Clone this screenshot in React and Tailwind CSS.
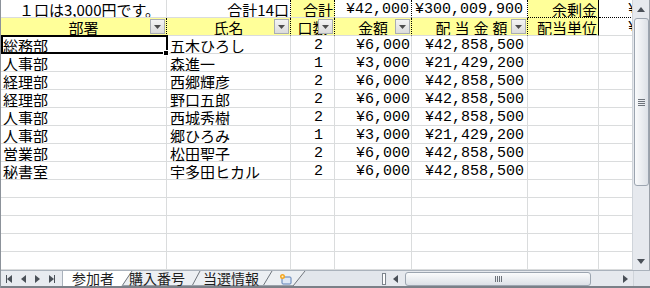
import React from "react";

const rows = [
  ["総務部", "五木ひろし", "2", "¥6,000", "¥42,858,500"],
  ["人事部", "森進一", "1", "¥3,000", "¥21,429,200"],
  ["経理部", "西郷輝彦", "2", "¥6,000", "¥42,858,500"],
  ["経理部", "野口五郎", "2", "¥6,000", "¥42,858,500"],
  ["人事部", "西城秀樹", "2", "¥6,000", "¥42,858,500"],
  ["人事部", "郷ひろみ", "1", "¥3,000", "¥21,429,200"],
  ["営業部", "松田聖子", "2", "¥6,000", "¥42,858,500"],
  ["秘書室", "宇多田ヒカル", "2", "¥6,000", "¥42,858,500"],
];

const base =
  "relative h-[18px] pt-[1px] border-r border-b border-[#dadcdd] overflow-hidden whitespace-nowrap leading-[17px] text-[15px] text-black";
const mono = "font-['Liberation_Mono',monospace] text-[14px]";

function Cell({ children, className = "" }) {
  return <div className={base + " " + className}>{children}</div>;
}

function Drop() {
  return (
    <div className="absolute right-[1px] top-[1px] w-[15px] h-[15px] border border-[#a9adb3] bg-gradient-to-b from-[#f4f4f4] to-[#dcdcdc] flex items-center justify-center">
      <svg width="7" height="4" viewBox="0 0 7 4">
        <polygon points="0,0 7,0 3.5,4" fill="#4d4d4d" />
      </svg>
    </div>
  );
}

function Tri({ dir, color = "#4a5058" }) {
  const pts = {
    up: "0,5 4,0 8,5",
    down: "0,0 8,0 4,5",
    left: "5,0 5,8 0,4",
    right: "0,0 0,8 5,4",
  }[dir];
  const w = dir === "up" || dir === "down" ? 8 : 5;
  const h = dir === "up" || dir === "down" ? 5 : 8;
  return (
    <svg width={w} height={h} viewBox={`0 0 ${w} ${h}`}>
      <polygon points={pts} fill={color} />
    </svg>
  );
}

export default function App() {
  const dotR = "border-r-black [border-right-style:dotted]";
  const dotB = "border-b-black [border-bottom-style:dotted]";
  const hdr = "bg-[#ffff99] text-[#0000ff]";
  return (
    <div className="w-[650px] h-[288px] bg-white overflow-hidden flex flex-col font-['Noto_Sans_CJK_JP',sans-serif] border-l border-[#8c929a]">
      <div className="flex h-[270px]">
        <div className="relative w-[632px] h-[270px] overflow-hidden">
          <div className="grid grid-cols-[166px_124px_44px_77px_116px_71px_80px] auto-rows-[18px] w-[678px]">
            {/* Row 1 */}
            <Cell className="text-right pr-[6px]">１口は3,000円です。</Cell>
            <Cell className={"text-right pr-[1px] " + dotR}>合計14口</Cell>
            <Cell className={"text-right pr-[1px] " + hdr + " " + dotR}>合計</Cell>
            <Cell className={"text-right pr-[2px] " + mono + " " + dotR}>¥42,000</Cell>
            <Cell className={"text-right pr-[4px] " + mono + " " + dotR}>¥300,009,900</Cell>
            <Cell className={"text-right pr-[1px] border-r-black " + hdr + " " + dotB}>余剰金</Cell>
            <Cell className={"pl-[29px] " + mono + " " + dotB}>¥9,999</Cell>
            {/* Row 2 */}
            <Cell className={"text-center " + hdr + " " + dotR}>
              <span className="underline underline-offset-[2px]">部署</span>
              <Drop />
            </Cell>
            <Cell className={"text-center " + hdr + " " + dotR}>
              <span className="underline underline-offset-[2px]">氏名</span>
              <Drop />
            </Cell>
            <Cell className={"text-center " + hdr + " " + dotR}>
              <span className="underline underline-offset-[2px]">口数</span>
              <Drop />
            </Cell>
            <Cell className={"text-center " + hdr + " " + dotR}>
              <span className="underline underline-offset-[2px]">金額</span>
              <Drop />
            </Cell>
            <Cell className={"text-center pl-[8px] " + hdr + " " + dotR}>
              <span className="underline underline-offset-[2px] tracking-[4px]">配当金額</span>
              <Drop />
            </Cell>
            <Cell className={"text-right pr-[1px] border-r-black " + hdr}>
              <span className="underline underline-offset-[2px]">配当単位</span>
            </Cell>
            <Cell className={"pl-[29px] " + mono}>¥9,999</Cell>
            {/* Data rows */}
            {rows.map((r, i) => (
              <React.Fragment key={i}>
                <Cell className="pl-[2px]">{r[0]}</Cell>
                <Cell className="pl-[3px]">{r[1]}</Cell>
                <Cell className={"text-right pr-[11px] " + mono}>{r[2]}</Cell>
                <Cell className={"text-right pr-[1px] " + mono}>{r[3]}</Cell>
                <Cell className={"text-right pr-[3px] " + mono}>{r[4]}</Cell>
                <Cell />
                <Cell />
              </React.Fragment>
            ))}
            {Array.from({ length: 5 }).map((_, i) => (
              <React.Fragment key={"e" + i}>
                <Cell />
                <Cell />
                <Cell />
                <Cell />
                <Cell />
                <Cell />
                <Cell />
              </React.Fragment>
            ))}
          </div>
          {/* selection */}
          <div className="absolute left-0 top-[35px] w-[167px] h-[19px] border-2 border-black pointer-events-none" />
          <div className="absolute left-[162px] top-[50px] w-[6px] h-[6px] bg-black border border-white" />
        </div>
        {/* vertical scrollbar */}
        <div className="w-[18px] h-[270px] bg-[#e6e9ee] border-l border-[#cfd4da] border-r border-r-[#9aa0a8] flex flex-col items-center">
          <div className="h-[18px] flex items-center justify-center">
            <Tri dir="up" />
          </div>
          <div className="w-[15px] h-[168px] rounded-[3px] border border-[#9ca5b0] bg-gradient-to-r from-[#fafbfc] to-[#dde1e7] flex flex-col items-center justify-center gap-[1px]">
            <div className="w-[7px] h-[1px] bg-[#6d737b]" />
            <div className="w-[7px] h-[1px] bg-[#6d737b]" />
            <div className="w-[7px] h-[1px] bg-[#6d737b]" />
            <div className="w-[7px] h-[1px] bg-[#6d737b]" />
          </div>
          <div className="flex-1" />
          <div className="h-[17px] flex items-center justify-center">
            <Tri dir="down" />
          </div>
        </div>
      </div>
      {/* bottom bar */}
      <div className="h-[18px] flex bg-[#e2e6ec] border-t border-[#aab2bc] border-b-2 border-b-[#7b8088]">
        <div className="w-[62px] flex items-center gap-[9px] pl-[5px] border-r border-[#aab2bc] bg-[#e8ebf0]">
          <div className="flex items-center">
            <div className="w-[1px] h-[8px] bg-[#4a5058]" />
            <Tri dir="left" />
          </div>
          <Tri dir="left" />
          <Tri dir="right" />
          <div className="flex items-center">
            <Tri dir="right" />
            <div className="w-[1px] h-[8px] bg-[#4a5058]" />
          </div>
        </div>
        <div className="relative w-[318px] h-[15px]">
          <svg className="absolute inset-0" width="318" height="15" viewBox="0 0 318 15">
            <polygon points="0,0 69,0 59,15 0,15" fill="#ffffff" />
            <polygon points="69,0 137,0 129,15 59,15" fill="#eceff3" />
            <polygon points="137,0 209,0 200,15 129,15" fill="#eceff3" />
            <polygon points="209,0 242,0 230,15 200,15" fill="#eceff3" />
            <line x1="59" y1="15" x2="69" y2="0" stroke="#6f757d" strokeWidth="1" />
            <line x1="129" y1="15" x2="137" y2="0" stroke="#6f757d" strokeWidth="1" />
            <line x1="200" y1="15" x2="209" y2="0" stroke="#6f757d" strokeWidth="1" />
            <line x1="230" y1="15" x2="242" y2="0" stroke="#6f757d" strokeWidth="1" />
            <line x1="59" y1="14.5" x2="230" y2="14.5" stroke="#9aa1aa" strokeWidth="1" />
          </svg>
          <div className="relative flex items-center h-[15px] text-[14px] leading-[15px] text-[#1e1e1e]">
            <span className="ml-[9px]">参加者</span>
            <span className="ml-[15px]">購入番号</span>
            <span className="ml-[18px]">当選情報</span>
            <span className="ml-[20px] flex items-center">
              <svg width="13" height="12" viewBox="0 0 13 12">
                <rect x="3" y="4" width="9" height="7" rx="1" fill="#dfe8f5" stroke="#5b7fb5" strokeWidth="1" />
                <circle cx="3.5" cy="3.5" r="2.5" fill="#f5a623" />
                <circle cx="3.5" cy="3.5" r="1" fill="#fff3c4" />
              </svg>
            </span>
          </div>
        </div>
        {/* splitter */}
        <div className="w-[6px] flex items-center justify-center">
          <div className="w-[4px] h-[12px] border border-[#7d848d] bg-white" />
        </div>
        {/* horizontal scrollbar */}
        <div className="w-[246px] flex items-center bg-[#e6e9ee]">
          <div className="w-[16px] flex items-center justify-center">
            <Tri dir="left" />
          </div>
          <div className="ml-[2px] w-[186px] h-[14px] rounded-[3px] border border-[#9ca5b0] bg-gradient-to-b from-[#fafbfc] to-[#dde1e7] flex items-center justify-center gap-[1px]">
            <div className="w-[1px] h-[6px] bg-[#6d737b]" />
            <div className="w-[1px] h-[6px] bg-[#6d737b]" />
            <div className="w-[1px] h-[6px] bg-[#6d737b]" />
            <div className="w-[1px] h-[6px] bg-[#6d737b]" />
          </div>
          <div className="flex-1" />
          <div className="w-[16px] flex items-center justify-center">
            <Tri dir="right" />
          </div>
        </div>
        <div className="flex-1 bg-[#e2e6ec] border-l border-[#cfd4da]" />
      </div>
    </div>
  );
}
